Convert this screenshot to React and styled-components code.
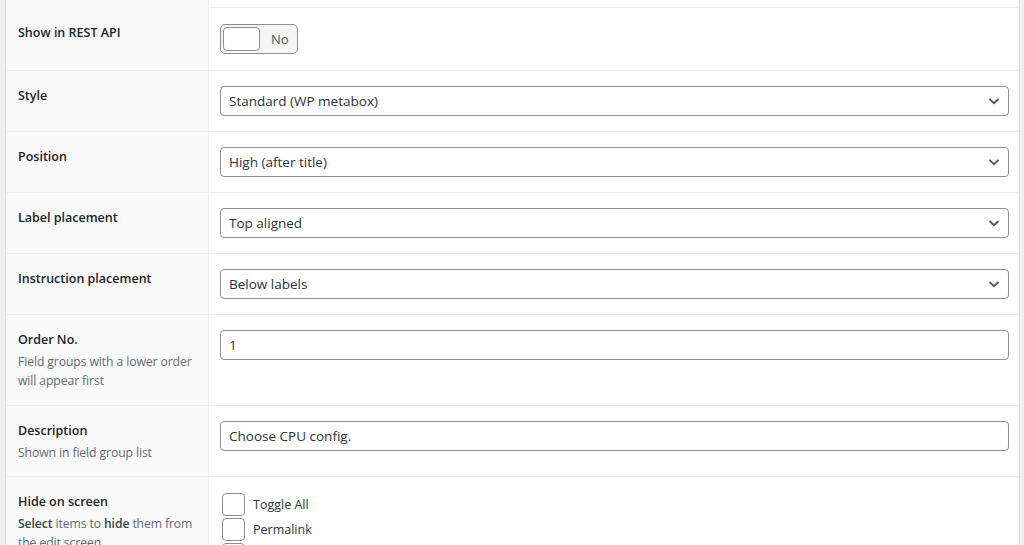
import React from 'react'
import styled, { createGlobalStyle } from 'styled-components'

const GlobalStyle = createGlobalStyle`
    html, body {
        margin: 0;
        padding: 0;
        background: #f0f0f1;
        font-family: "Open Sans", "Noto Sans", sans-serif;
        overflow: hidden;
    }
`

const Page = styled.div`
    height: 545px;
    padding-left: 5px;
    width: 1015px;
`

const Table = styled.div`
    background: #fff;
    border-left: 1px solid #dcdcde;
    border-right: 1px solid #dcdcde;
    width: 1013px;
`

const Row = styled.div`
    display: grid;
    grid-template-columns: 203px 1fr;
    border-bottom: 1px solid #eeeeee;
    height: ${p => p.h}px;
    box-sizing: border-box;
`

const LabelCell = styled.div`
    background: #f9f9f9;
    border-right: 1px solid #eeeeee;
    padding: ${p => p.top || 15}px 4px 0 12px;
`

const Label = styled.div`
    font-size: 12.5px;
    font-weight: 600;
    color: #1d2327;
    line-height: 20px;
`

const Desc = styled.div`
    font-size: 12.2px;
    color: #646970;
    line-height: 19px;
    margin-top: 2px;
    letter-spacing: -0.1px;

    b {
        font-weight: 600;
        color: #3c434a;
    }
`

const InputCell = styled.div`
    padding: ${p => p.top || 15}px 10px 0 11px;
`

const TextInput = styled.div`
    box-sizing: border-box;
    height: 30px;
    border: 1px solid #8c8f94;
    border-radius: 4px;
    padding: 0 8px;
    display: flex;
    align-items: center;
    font-size: 13.5px;
    color: #2c3338;
`

const Select = styled(TextInput)`
    justify-content: space-between;
    padding-right: 6px;
`

const Switch = styled.div`
    box-sizing: border-box;
    width: 78px;
    height: 30px;
    border: 1px solid #8c8f94;
    border-radius: 5px;
    background: #f5f5f5;
    padding: 2px;
    display: flex;
    align-items: center;
    gap: 11px;
    font-size: 13px;
    color: #50575e;
`

const Knob = styled.div`
    box-sizing: border-box;
    width: 37px;
    height: 24px;
    background: #fff;
    border: 1px solid #8c8f94;
    border-radius: 4px;
`

const CheckList = styled.div`
    display: flex;
    flex-direction: column;
    gap: 2px;
    padding-left: 2px;
`

const CheckItem = styled.div`
    display: flex;
    align-items: center;
    gap: 8px;
    font-size: 12.5px;
    color: #2c3338;
`

const Box = styled.div`
    box-sizing: border-box;
    width: 23px;
    height: 23px;
    border: 1px solid #8c8f94;
    border-radius: 4px;
    background: #fff;
`

const Chevron = () => (
    <svg width="16" height="16" viewBox="0 0 16 16">
        <path d="M3.5 6 L8 10.2 L12.5 6" fill="none" stroke="#50575e" strokeWidth="1.8" />
    </svg>
)

const selects = [
    ['Style', 'Standard (WP metabox)'],
    ['Position', 'High (after title)'],
    ['Label placement', 'Top aligned'],
    ['Instruction placement', 'Below labels'],
]

function App() {
    return (
        <>
        <GlobalStyle />
        <Page>
            <Table>
                <Row h={8}>
                    <LabelCell />
                    <div />
                </Row>

                <Row h={63}>
                    <LabelCell><Label>Show in REST API</Label></LabelCell>
                    <InputCell top={16}>
                        <Switch>
                            <Knob />
                            <span>No</span>
                        </Switch>
                    </InputCell>
                </Row>

                {selects.map(([label, value]) => (
                    <Row h={61} key={label}>
                        <LabelCell><Label>{label}</Label></LabelCell>
                        <InputCell>
                            <Select>
                                <span>{value}</span>
                                <Chevron />
                            </Select>
                        </InputCell>
                    </Row>
                ))}

                <Row h={91}>
                    <LabelCell>
                        <Label>Order No.</Label>
                        <Desc>Field groups with a lower order will appear first</Desc>
                    </LabelCell>
                    <InputCell>
                        <TextInput>1</TextInput>
                    </InputCell>
                </Row>

                <Row h={71}>
                    <LabelCell>
                        <Label>Description</Label>
                        <Desc>Shown in field group list</Desc>
                    </LabelCell>
                    <InputCell>
                        <TextInput>Choose CPU config.</TextInput>
                    </InputCell>
                </Row>

                <Row h={120}>
                    <LabelCell>
                        <Label>Hide on screen</Label>
                        <Desc><b>Select</b> items to <b>hide</b> them from the edit screen.</Desc>
                    </LabelCell>
                    <InputCell top={16}>
                        <CheckList>
                            <CheckItem><Box /><span>Toggle All</span></CheckItem>
                            <CheckItem><Box /><span>Permalink</span></CheckItem>
                            <CheckItem><Box /><span>Content Editor</span></CheckItem>
                        </CheckList>
                    </InputCell>
                </Row>
            </Table>
        </Page>
        </>
    )
}

export default App
